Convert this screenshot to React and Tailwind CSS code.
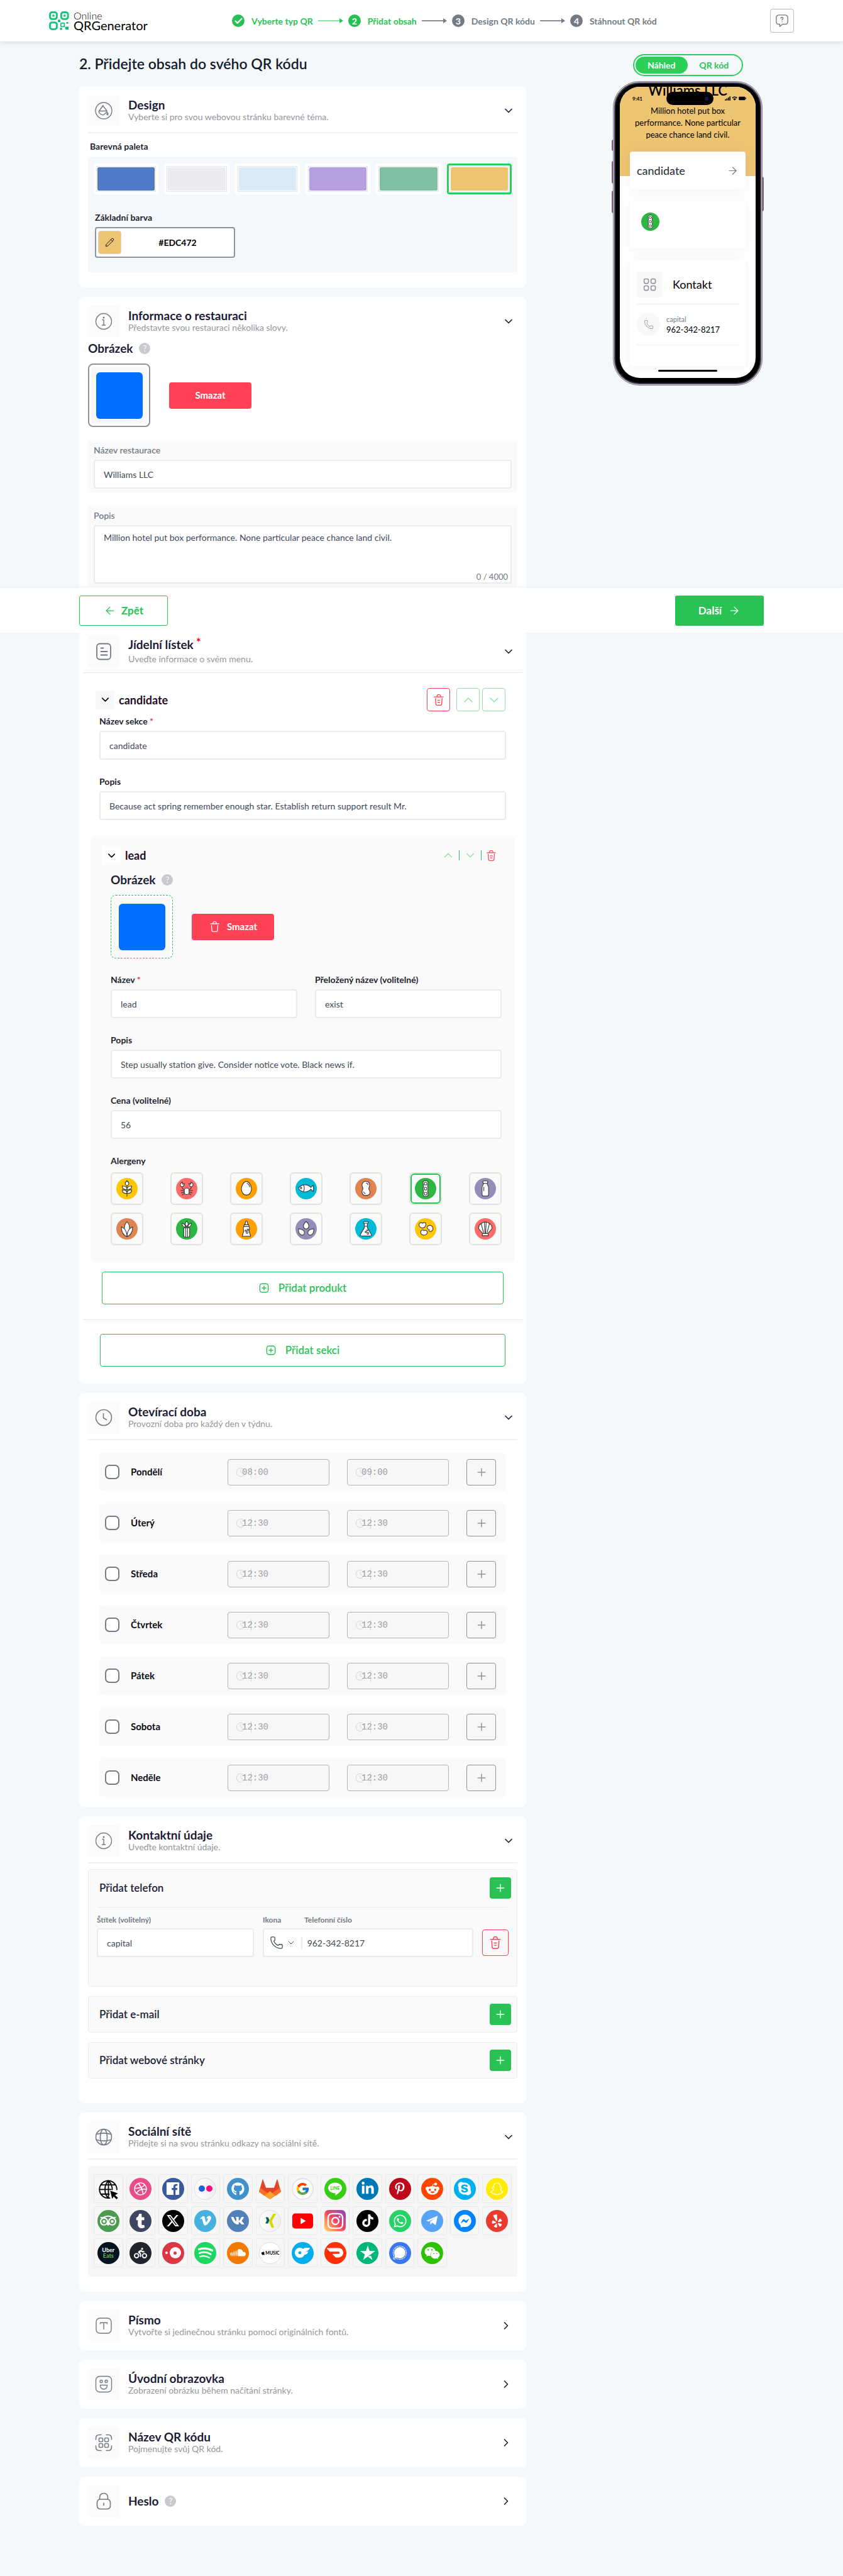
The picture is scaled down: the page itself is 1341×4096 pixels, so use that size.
import React from "react";
import {
  ArrowLeft, ArrowRight, Check, ChevronDown, ChevronRight, ChevronUp, Clock, Pencil, Phone, Plus,
} from "lucide-react";
import {
  FaApple, FaDribbble, FaFacebookMessenger, FaGithub, FaLinkedinIn, FaPinterestP,
  FaRedditAlien, FaSkype, FaSnapchat, FaSoundcloud, FaTiktok, FaTumblr, FaVimeoV,
  FaWeixin, FaWhatsapp, FaXTwitter, FaYelp, FaInstagram, FaPersonBiking,
} from "react-icons/fa6";
import { FaVk } from "react-icons/fa";
import { SiDoordash, SiOnlyfans, SiSignal, SiTripadvisor, SiTrustpilot } from "react-icons/si";
import { FcGoogle } from "react-icons/fc";

/* ---------- line icons ---------- */

const Line = ({ size = 28, w = 1.4, children, className = "" }) => (
  <svg viewBox="0 0 28 28" width={size} height={size} fill="none" stroke="currentColor" strokeWidth={w}
    strokeLinecap="round" strokeLinejoin="round" className={className} aria-hidden="true">
    {children}
  </svg>
);

const DropIcon = () => (
  <Line>
    <circle cx="14" cy="14" r="13" />
    <path d="M13 5.500L7 14c-1 1.500-.6 3 .5 4l2.500 2c1.500 1 3.500 1 5-.2l3.500-3.300c.8-1 .8-2 0-3L12.500 6M7.500 14.500h11M20 17c1.300 1.800 1.300 3.700 0 3.700s-1.300-1.900 0-3.700z" />
  </Line>
);
const InfoIcon = () => (
  <Line>
    <circle cx="14" cy="14" r="12.500" />
    <path d="M12 11.500h2V20M11.500 20h5" />
    <circle cx="14" cy="8" r="0.800" fill="currentColor" />
  </Line>
);
const MenuIcon = () => (
  <Line w={1.8}>
    <rect x="3" y="1.500" width="22" height="25" rx="5" />
    <path d="M9.500 8.500h4M9.500 14h10M9.500 19.500h10" />
  </Line>
);
const ClockIcon = () => (
  <Line w={1.6}>
    <circle cx="14" cy="14" r="12.500" />
    <path d="M13.500 7.500v7l5 3" />
  </Line>
);
const GlobeIcon = () => (
  <Line w={1.6}>
    <circle cx="14" cy="14" r="12.500" />
    <ellipse cx="14" cy="14" rx="5.500" ry="12.500" />
    <path d="M2.500 9.500c7-2 16-2 23 0M2.500 18.500c7 2 16 2 23 0" />
  </Line>
);
const TypeIcon = () => (
  <Line>
    <rect x="2" y="2" width="24" height="24" rx="6" />
    <path d="M8.500 11V9.200h11V11M14 9.200v10" />
  </Line>
);
const SmileIcon = () => (
  <Line>
    <rect x="1.500" y="1.500" width="25" height="25" rx="6" />
    <circle cx="10" cy="9.500" r="2" />
    <circle cx="18" cy="9.500" r="2" />
    <path d="M8.500 15.500h11c.5 3.500-2 6.500-5.500 6.500s-6-3-5.500-6.500z" />
  </Line>
);
const QrIcon = () => (
  <Line w={1.6}>
    <path d="M1.500 9V7c0-3.500 2-5.500 5.500-5.500h3M18 1.500h3c3.500 0 5.500 2 5.500 5.500v2M1.500 19v2c0 3.500 2 5.500 5.500 5.500h3M18 26.500h3c3.500 0 5.500-2 5.500-5.500v-2" />
    <rect x="6.500" y="6.500" width="6" height="6" rx="1.500" />
    <rect x="15.500" y="6.500" width="6" height="6" rx="1.500" />
    <rect x="6.500" y="15.500" width="6" height="6" rx="1.500" />
    <rect x="15.500" y="15.500" width="6" height="6" rx="1.500" />
  </Line>
);
const LockIcon = () => (
  <Line w={1.7}>
    <rect x="3.500" y="11" width="21" height="15.500" rx="5" />
    <path d="M7.500 11V8.500C7.500 4 10 1.500 14 1.500S20.500 4 20.500 8.500V11M14 17v3.500" />
  </Line>
);
const TrashIcon = ({ size = 20, plain = false }) => (
  <svg viewBox="0 0 24 24" width={size} height={size} fill="none" stroke="currentColor" strokeWidth="1.600"
    strokeLinecap="round" strokeLinejoin="round" aria-hidden="true">
    <path d="M3.500 6.200h17M8.500 5.600l.4-2C9.100 2.500 9.700 2 10.700 2h2.600c1 0 1.600.5 1.800 1.600l.4 2M18.300 9l-.7 10.300c-.1 1.800-.9 2.700-2.700 2.700H9.100c-1.800 0-2.600-.9-2.700-2.700L5.700 9" />
    {!plain && <path d="M9.800 12.500h4.400M10.300 16.500h3.400" />}
  </svg>
);
const AddIcon = () => (
  <svg viewBox="0 0 18 18" width="16" height="16" fill="none" stroke="currentColor" strokeWidth="1.600"
    strokeLinecap="round" aria-hidden="true">
    <rect x="1.500" y="1.500" width="15" height="15" rx="4" />
    <path d="M9 5.500v7M5.500 9h7" />
  </svg>
);

/* ---------- allergens ---------- */

const allergens = [
  { name: "Lepek", bg: "#ffc700", art: (
    <>
      <path d="M18 14v17" />
      <path d="M18 4.500c2 2 3 3.500 3 5s-1 3-3 4c-2-1-3-2.500-3-4s1-3 3-5z" />
      <path d="M18 19.500c-5.500.3-8-1.500-8-6 5 0 8 1.500 8 6zM18 19.500c5.500.3 8-1.500 8-6-5 0-8 1.500-8 6zM18 26c-5.500.3-8-1.500-8-6 5 0 8 1.500 8 6zM18 26c5.500.3 8-1.500 8-6-5 0-8 1.500-8 6z" />
    </>) },
  { name: "Korýši", bg: "#ff6b6b", art: (
    <>
      <path fill="none" d="M10 14l1 4 3.500 2M26 14l-1 4-3.500 2M14 22l-6-1M14 24.500l-5 .5M14.500 26.500l-4 2M22 22l6-1M22 24.500l5 .5M21.500 26.500l4 2" />
      <path d="M11 7c-2.500 1-4.500 3.500-3.500 6s4.500 2.500 5.500 0c.8-1.500.8-2.500 1.500-3.500L11 10.500zM25 7c2.500 1 4.500 3.500 3.500 6s-4.500 2.500-5.500 0c-.8-1.500-.8-2.500-1.500-3.500l3.500 1z" />
      <rect x="14" y="17" width="8" height="11" rx="4" />
    </>) },
  { name: "Vejce", bg: "#ffa000", art: (
    <>
      <path d="M18 6c4.500 0 8.500 7 8.500 12.500S23 29 18 29s-8.500-5-8.500-10.500S13.500 6 18 6z" />
      <path fill="none" d="M19 9c2.500 1 4 3.500 4.500 6" />
    </>) },
  { name: "Ryby", bg: "#00bad6", art: (
    <>
      <path d="M5 17.500c3-4.500 7-6 11-6 5 0 8 2 10 4.500l4-4c.6 4 .6 7 0 11l-4-4c-2 2.500-5 4.500-10 4.500-4 0-8-1.500-11-6z" />
      <path fill="none" d="M13.500 12c1.800 3.500 1.800 7.500 0 11" />
      <circle cx="9.500" cy="17" r="1.200" />
    </>) },
  { name: "Arašídy", bg: "#df8351", art: (
    <>
      <path d="M18 5.500c4 0 6.500 3 6.500 6.500 0 2.500-1.500 4-1.500 6s2 3 2 6c0 3.500-3 5.500-7 5.500s-6.500-2.500-6.500-6 1.500-3.500 1.500-5.500-1.500-3.500-1.500-6c0-3.500 2.500-6.500 6.500-6.500z" />
      <path fill="none" d="M18.500 8.500c2 .3 3 1.500 3.200 3M14 23.500c.5 1.500 1.500 2.500 3 2.800" />
    </>) },
  { name: "Sója", bg: "#2cb742", selected: true, art: (
    <>
      <path d="M18 4.500c2.800 0 4.500 2 4.500 4.500 0 1.800-1 2.500-1 4.500s1 2.500 1 4.500-1 2.500-1 4.500 1 2.500 1 4.300c0 2.700-1.700 4.700-4.500 4.700s-4.500-2-4.500-4.700c0-1.800 1-2.300 1-4.300s-1-2.500-1-4.500 1-2.500 1-4.500-1-2.700-1-4.500c0-2.500 1.700-4.500 4.500-4.500z" />
      <circle cx="18" cy="9.500" r="2.400" /><circle cx="18" cy="18" r="2.400" /><circle cx="18" cy="26.500" r="2.400" />
    </>) },
  { name: "Mléko", bg: "#958cb8", art: (
    <>
      <rect x="14" y="5" width="8" height="4" rx="1" />
      <path d="M15 9h6c0 3 2.500 4 2.500 7v12c0 1.500-1 2.500-2.500 2.500h-6c-1.500 0-2.500-1-2.500-2.500V16c0-3 2.500-4 2.500-7z" />
      <path fill="none" d="M15.500 15.500v6" />
    </>) },
  { name: "Kukuřice", bg: "#df8351", art: (
    <>
      <path d="M18 6c3.500 3 4.500 8 4.500 13s-2 9-4.500 12c-2.500-3-4.500-7-4.500-12S14.500 9 18 6z" />
      <path d="M8.500 14.500c6 2.500 9.500 8 9.500 16.500-6-2-10-8.500-9.500-16.500zM27.500 14.500c-6 2.500-9.500 8-9.500 16.500 6-2 10-8.500 9.500-16.500z" />
    </>) },
  { name: "Celer", bg: "#2cb742", art: (
    <>
      <path d="M13 16h10v13c0 2-1.500 3-3 3h-4c-1.500 0-3-1-3-3zM16.500 16v15.500M19.500 16v15.500" />
      <path d="M18 5c1.500 1.500 2.500 3 2.500 4.500S19.500 13 18 14c-1.500-1-2.500-3-2.500-4.500S16.500 6.500 18 5zM10 8.500c3.500.5 6 3 6 7-3.500-.5-6-3.500-6-7zM26 8.500c-3.500.5-6 3-6 7 3.500-.5 6-3.500 6-7z" />
    </>) },
  { name: "Hořčice", bg: "#ffa000", art: (
    <>
      <path d="M17 5h2l1.500 6h-5zM14 11h8v3h-8z" />
      <path d="M13.500 14h9c2 3 0 5 0 7.500s2 4 2.500 9H11c.5-5 2.500-6.500 2.500-9s-2-4.500 0-7.500z" />
      <circle cx="17" cy="21" r="1.200" /><circle cx="20.500" cy="19.500" r="1.200" /><circle cx="19" cy="24" r="1.500" />
    </>) },
  { name: "Sezam", bg: "#958cb8", art: (
    <>
      <path d="M18 5.500c2.500 2 4.500 5 4.500 7.500S21 18 18 18s-4.500-2.500-4.500-5S15.500 7.500 18 5.500z" />
      <path d="M5 18c4 0 8 1.500 9.500 4s.5 5-1.500 6-5 0-6.500-2.500S5 21 5 18zM31 18c-4 0-8 1.500-9.500 4s-.5 5 1.500 6 5 0 6.500-2.500S31 21 31 18z" />
    </>) },
  { name: "Siřičitany", bg: "#00bad6", art: (
    <>
      <path d="M15.500 8v8L9 27c-.8 1.700 0 3 2 3h14c2 0 2.800-1.300 2-3l-6.500-11V8z" />
      <rect x="14" y="5.500" width="8" height="3" rx="1.200" />
      <path fill="none" d="M15.500 13.500h5" />
      <circle cx="18" cy="23" r="1.200" /><circle cx="20.500" cy="20.500" r="0.900" /><circle cx="21.500" cy="25.500" r="1.500" />
    </>) },
  { name: "Vlčí bob", bg: "#ffc700", art: (
    <>
      <path d="M7 10c1-3 4-3 6-1.500 2-2 5-1.500 5.500 1s-1.500 6.500-5 7S6 13.500 7 10zM21 14c2.500-3 7-2.500 8.500.5s1 6-2 7.500-4.500-1-3.500-3c-2.500 0-4-2.500-3-5zM10 22c1-2.500 4-3 5.500-1 2-1.500 5 0 5.500 2.500s-3 5.500-6.500 5S9 25 10 22z" />
    </>) },
  { name: "Měkkýši", bg: "#ff6b6b", art: (
    <>
      <path d="M14 26L7 18c-1-4 1.500-7.500 4-9 2-2 4.500-2.500 7-2.500s5 .5 7 2.500c2.500 1.500 5 5 4 9l-7 8z" />
      <path fill="none" d="M15.500 26L11 9M17.500 26L16.500 6.500M20.500 26L25 9M18.500 26l1-19.500" />
      <path d="M13.500 26h9l1 3.500h-11z" />
    </>) },
];

const AllergenArt = ({ item, size }) => (
  <svg viewBox="0 0 36 36" width={size} height={size} aria-hidden="true">
    <circle cx="18" cy="18" r="18" fill={item.bg} />
    <g fill="#fff" stroke="#3b3b3b" strokeWidth="1.200" strokeLinejoin="round" strokeLinecap="round">
      {item.art}
    </g>
  </svg>
);

/* ---------- social networks ---------- */

const Disc = ({ className = "text-white", children }) => (
  <span className={`flex size-[35px] items-center justify-center rounded-full ${className}`}>{children}</span>
);

const socials = [
  ["Web", (
    <svg viewBox="0 0 38 38" width="35" height="35" fill="none" stroke="#000" strokeWidth="2">
      <path d="M22 34.500A15 15 0 1 1 33.500 21M19 5v30M4.500 20H24M7 12h24M7 28h14M19 5c-8 7-8 23 0 30M19 5c5 5 7 10 6.500 16" />
      <path d="M22 22l13.500 5-5 2.500 5 5-2.500 2.500-5-5-2.500 4z" fill="#000" stroke="none" />
    </svg>)],
  ["Dribbble", <Disc className="bg-[#ea4c89] text-white"><FaDribbble size={21} /></Disc>],
  ["Facebook", (
    <Disc className="bg-[#3b5998]">
      <svg viewBox="0 0 24 24" width="22" height="22"><rect x="1" y="1" width="22" height="22" rx="1.500" fill="#fff" /><path d="M13 23v-8.500h-3V11h3V8.500C13 5.500 14.800 4 17.500 4H20v3.200h-1.800c-1.200 0-1.600.6-1.600 1.600V11H20l-.5 3.500h-2.900V23z" fill="#3b5998" /></svg>
    </Disc>)],
  ["Flickr", (
    <Disc className="gap-[2px] border border-[#dcdcdc] bg-gradient-to-r from-white to-[#ededed]">
      <span className="size-[10px] rounded-full bg-[#1c62db]" /><span className="size-[10px] rounded-full bg-[#ff0883]" />
    </Disc>)],
  ["GitHub", <Disc className="bg-[#4191cd] text-white"><FaGithub size={21} /></Disc>],
  ["GitLab", (
    <svg viewBox="0 0 38 38" width="35" height="35">
      <path d="M2 17L6.500 1.500 12 17h14l5.500-15.500L36 17l2 7-19 13L0 24z" fill="#e24329" />
      <path d="M2 17l17 12 17-12 2 7-9 7-10-8-10 8-9-7z" fill="#fc6d26" />
      <path d="M19 37l-9-7 9-7 9 7z" fill="#fca326" />
    </svg>)],
  ["Google", <Disc className="border-2 border-[#e4e4e4] bg-white"><FcGoogle size={23} /></Disc>],
  ["Line", (
    <Disc className="bg-[#38cd14]">
      <svg viewBox="0 0 24 24" width="24" height="24">
        <path d="M12 2.500c6 0 11 3.700 11 8.500 0 4-4 7.500-10.500 12v-3.700C6 19.300 1 15.700 1 11s5-8.500 11-8.500z" fill="#fff" />
        <text x="12" y="13.500" textAnchor="middle" fontSize="7" fontWeight="700" fill="#38cd14">LINE</text>
      </svg>
    </Disc>)],
  ["LinkedIn", <Disc className="bg-[#0077b5] text-white"><FaLinkedinIn size={22} /></Disc>],
  ["Pinterest", <Disc className="bg-[#bd081c] text-white"><FaPinterestP size={20} /></Disc>],
  ["Reddit", <Disc className="bg-[#ff4500] text-white"><FaRedditAlien size={22} /></Disc>],
  ["Skype", <Disc className="bg-[#00aff0] text-white"><FaSkype size={24} /></Disc>],
  ["Snapchat", <Disc className="bg-[#ffec06] text-white"><FaSnapchat size={21} /></Disc>],
  ["Tripadvisor", <Disc className="bg-[#4b9b51] text-white"><SiTripadvisor size={26} /></Disc>],
  ["Tumblr", <Disc className="bg-[#3d4661] text-white"><FaTumblr size={23} /></Disc>],
  ["X", <Disc className="bg-black text-white"><FaXTwitter size={22} /></Disc>],
  ["Vimeo", <Disc className="bg-[#45b1dc] text-white"><FaVimeoV size={20} /></Disc>],
  ["VK", <Disc className="bg-[#5281b9] text-white"><FaVk size={22} /></Disc>],
  ["Xing", (
    <Disc className="border border-[#dcdcdc] bg-gradient-to-r from-white to-[#ededed]">
      <svg viewBox="0 0 24 24" width="22" height="22"><path d="M4 6h4l2.500 5L8 17H3.500L6 11.500z" fill="#00605e" /><path d="M17 0h5l-7.500 13L19 24h-5L9.500 13z" fill="#d6da00" /></svg>
    </Disc>)],
  ["YouTube", (
    <svg viewBox="0 0 38 38" width="35" height="35"><rect x="1" y="6" width="36" height="26" rx="5" fill="#f00" /><path d="M15.500 13.500v11l9-5.500z" fill="#fff" /></svg>)],
  ["Instagram", (
    <span className="flex size-[34px] items-center justify-center rounded-[7px] bg-gradient-to-tr from-[#ffd65c] via-[#f0425d] to-[#8a3ac8] text-white"><FaInstagram size={29} /></span>)],
  ["TikTok", <Disc className="bg-black text-white"><FaTiktok size={20} /></Disc>],
  ["WhatsApp", <Disc className="bg-[#25d366] text-white"><FaWhatsapp size={23} /></Disc>],
  ["Telegram", (
    <Disc className="bg-[#55a4f5]"><svg viewBox="0 0 24 24" width="22" height="22"><path d="M1 12L21 3.500 17.500 20l-6-4.500L8.500 19l-.8-5L17 7 5.500 13.500z" fill="#fff" /></svg></Disc>)],
  ["Messenger", <Disc className="bg-[#0084ff] text-white"><FaFacebookMessenger size={21} /></Disc>],
  ["Yelp", <Disc className="bg-[#ea3b2f] text-white"><FaYelp size={21} /></Disc>],
  ["Uber Eats", (
    <Disc className="flex-col bg-[#00131f] text-[9px] leading-[9px] font-bold text-white"><span>Uber</span><span className="text-[#6cbf4a]">Eats</span></Disc>)],
  ["Postmates", <Disc className="bg-[#222530] text-white"><FaPersonBiking size={21} /></Disc>],
  ["OpenTable", (
    <Disc className="gap-[3px] bg-[#da3743]"><span className="size-1 rounded-full bg-white" /><span className="flex size-[18px] items-center justify-center rounded-full bg-white"><span className="size-[5px] rounded-full bg-[#da3743]" /></span></Disc>)],
  ["Spotify", (
    <Disc className="bg-[#1ed760]"><svg viewBox="0 0 38 38" width="35" height="35" fill="none" stroke="#fff" strokeLinecap="round"><path d="M8 12.500c8-2.500 17-1.500 23 2" strokeWidth="3.600" /><path d="M9 19c6-2 14-1.500 19.500 2" strokeWidth="3" /><path d="M10 25c5-1.500 11-1 16 2" strokeWidth="2.500" /></svg></Disc>)],
  ["SoundCloud", <Disc className="bg-[#f27a00] text-white"><FaSoundcloud size={25} /></Disc>],
  ["Apple Music", (
    <Disc className="border border-[#dcdcdc] bg-white text-[7px] leading-none font-bold text-black"><FaApple size={7} /><span>MUSIC</span></Disc>)],
  ["OnlyFans", <Disc className="bg-[#00aeef] text-white"><SiOnlyfans size={24} /></Disc>],
  ["DoorDash", <Disc className="bg-[#ff3008] text-white"><SiDoordash size={26} /></Disc>],
  ["Trustpilot", <Disc className="bg-[#00b67a] text-white"><SiTrustpilot size={24} /></Disc>],
  ["Signal", <Disc className="bg-[#3a76f0] text-white"><SiSignal size={22} /></Disc>],
  ["WeChat", <Disc className="bg-[#2dc100] text-white"><FaWeixin size={25} /></Disc>],
];

/* ---------- shared parts ---------- */

const Card = ({ children, className = "" }) => (
  <section className={`rounded-lg bg-white px-[14px] pt-[14px] ${className}`}>{children}</section>
);

const CardHead = ({ icon, title, sub, required, help, closed }) => (
  <button type="button" className="flex w-full items-center gap-[14px] text-left">
    <span className="flex size-[50px] shrink-0 items-center justify-center rounded bg-[#fbfbfb] text-[#747b84]">{icon}</span>
    <span className={`flex grow flex-col ${required ? "gap-1" : ""}`}>
      <span className="flex items-center gap-[10px] text-[19px] leading-5 font-bold text-[#1c1c35]">
        <span className="flex">{title}{required && <span className="-mt-1 ml-1 text-[#e30b1e]">*</span>}</span>
        {help && <Help />}
      </span>
      {sub && <span className="text-[14px] leading-[18px] text-[#96969e]">{sub}</span>}
    </span>
    {closed
      ? <ChevronRight size={20} strokeWidth={2} className="mr-2 text-[#1c1c35]" />
      : <ChevronDown size={20} strokeWidth={2} className="mr-1 text-[#1c1c35]" />}
  </button>
);

const Help = () => (
  <span className="flex size-[18px] items-center justify-center rounded-full bg-[#c9c9ce] text-[13px] leading-none font-normal text-white">?</span>
);

const Rule = () => <hr className="mt-[9px] border-t-2 border-[#f0f1f3]" />;

const inputClass = "h-[46px] w-full min-w-0 rounded border-2 border-[#ebebeb] bg-white px-[14px] text-[14px] text-[#424a5a]";

const Field = ({ id, label, value, required, className = "" }) => (
  <div className={`flex flex-col ${className}`}>
    <label htmlFor={id} className="mb-[5px] text-[14px] leading-5 font-bold text-[#1f2430]">
      {label}{required && <span className="text-[#e0323f]"> *</span>}
    </label>
    <input id={id} defaultValue={value} className={inputClass} />
  </div>
);

const ImagePicker = ({ dashed, withIcon }) => (
  <div className="flex items-center gap-[30px]">
    <div className={`flex h-[101px] w-[99px] items-center justify-center rounded-lg bg-white p-[3px] ${dashed ? "border border-dashed border-[#2ac254]" : "border-2 border-[#92929c]"}`}>
      <div className="flex size-full items-center justify-center rounded bg-[#f8f8f8]">
        <div className="size-[74px] rounded-md bg-[#006fff]" role="img" aria-label="Obrázek" />
      </div>
    </div>
    <button type="button" className="flex h-[42px] w-[131px] items-center justify-center gap-[10px] rounded bg-[#ff4155] text-[15px] font-bold text-white">
      {withIcon && <TrashIcon size={19} plain />}
      Smazat
    </button>
  </div>
);

const OutlineAdd = ({ children, className = "" }) => (
  <button type="button" className={`flex h-[52px] items-center justify-center gap-[15px] rounded border border-[#2ac254] text-[17px] font-semibold text-[#2ac254] ${className}`}>
    <AddIcon />
    {children}
  </button>
);

/* ---------- header ---------- */

const Logo = () => (
  <a href="#" className="flex items-center gap-[7px]">
    <svg viewBox="0 0 34 32" width="32" height="30" fill="none" stroke="#1bc47d" strokeWidth="3.200" aria-hidden="true">
      <rect x="1.600" y="1.600" width="11.500" height="11.500" rx="3.500" />
      <rect x="20.600" y="1.600" width="11.500" height="11.500" rx="3.500" />
      <rect x="1.600" y="18.800" width="11.500" height="11.500" rx="3.500" />
      <path d="M5.600 5.600h3.500v3.500H5.600zM24.600 5.600h3.500v3.500h-3.500z" fill="#1bc47d" stroke="none" />
      <rect x="20" y="20" width="6" height="6" rx="1" strokeWidth="2" />
      <path d="M15 14h4v4h-4zM29.500 18h3v3h-3zM18.500 28h3.500v3.500h-3.500zM28 26h5v5h-5zM27 27h2v2h-2z" fill="#17b27a" stroke="none" />
    </svg>
    <span className="flex w-[121px] flex-col text-black">
      <span className="text-[16px] leading-[13px] font-light">Online</span>
      <span className="text-[20px] leading-[18px]">QRGenerator</span>
    </span>
  </a>
);

const StepArrow = ({ green }) => (
  <svg viewBox="0 0 40 10" width="40" height="10" className="mx-2 shrink-0" aria-hidden="true">
    <path d="M0 5h34" stroke={green ? "#2ac254" : "#1c1c35"} strokeWidth="1.200" />
    <path d="M34 1l6 4-6 4z" fill={green ? "#2ac254" : "#747b84"} />
  </svg>
);

const steps = ["Vyberte typ QR", "Přidat obsah", "Design QR kódu", "Stáhnout QR kód"];

const Header = () => (
  <header className="flex h-[67px] items-center border-b border-[#dfe1e4] bg-white px-[78px] shadow-[0_2px_8px_rgba(0,0,0,0.08)]">
    <Logo />
    <ol className="ml-[131px] flex items-center">
      {steps.map((s, i) => (
        <li key={s} className={`flex items-center text-[14px] font-bold ${i < 2 ? "text-[#2ac254]" : "text-[#747b84]"}`}>
          <span className={`mr-[11px] flex size-[20px] items-center justify-center rounded-full text-white ${i < 2 ? "bg-[#2abf56]" : "bg-[#747b84]"}`}>
            {i === 0 ? <Check size={15} strokeWidth={3.500} /> : i + 1}
          </span>
          <span className="whitespace-nowrap">{s}</span>
          {i < 3 && <StepArrow green={i === 0} />}
        </li>
      ))}
    </ol>
    <button type="button" aria-label="Nápověda" className="ml-auto flex size-[38px] items-center justify-center rounded border border-[#b9bcc1] text-[#747b84]">
      <svg viewBox="0 0 24 24" width="22" height="22" fill="none" stroke="currentColor" strokeWidth="1.500" strokeLinecap="round" strokeLinejoin="round">
        <path d="M7 2h10c3 0 5 2 5 5v6c0 3-2 5-5 5h-4l-5 4v-4H7c-3 0-5-2-5-5V7c0-3 2-5 5-5z" />
        <path d="M12 11c0-1.600 2-1.700 2-3.200 0-1.100-.9-1.800-2-1.800s-2 .7-2 1.800M12 13.800v.1" />
      </svg>
    </button>
  </header>
);

/* ---------- cards ---------- */

const palette = ["bg-[#5079c8]", "bg-[#ebecf1]", "bg-[#daeaf6]", "bg-[#b69edf]", "bg-[#7fc0a0]", "bg-[#ecc472]"];

const DesignCard = () => (
  <Card className="pb-6">
    <CardHead icon={<DropIcon />} title="Design" sub="Vyberte si pro svou webovou stránku barevné téma." />
    <Rule />
    <p className="mt-[11px] ml-[3px] text-[14px] leading-5 font-bold text-[#1f2430]">Barevná paleta</p>
    <div className="mt-[6px] rounded bg-[#f4f8fb] px-[9px] pt-[11px] pb-[23px]">
      <div className="grid grid-cols-6 gap-[9px]">
        {palette.map((c, i) => (
          <button key={c} type="button" aria-label={`Paleta ${i + 1}`}
            className={`h-[49px] rounded border-[3px] bg-white p-px ${i === 5 ? "border-[#2acf57]" : "border-white"}`}>
            <span className="block size-full border border-[#e6e6ea] p-px">
              <span className={`block size-full rounded-[2px] ${c}`} />
            </span>
          </button>
        ))}
      </div>
      <label htmlFor="base" className="mt-[27px] ml-[2px] block text-[14px] leading-5 font-bold text-[#1f2430]">Základní barva</label>
      <div className="mt-[5px] ml-[2px] flex h-[49px] w-[223px] items-center rounded border-2 border-[#92929c] bg-white pl-[3px]">
        <span className="flex size-[37px] shrink-0 items-center justify-center rounded border border-[#d4d4da] bg-[#ecc472]">
          <Pencil size={15} strokeWidth={1.500} />
        </span>
        <input id="base" defaultValue="#EDC472" className="w-full min-w-0 text-center text-[14px] font-bold text-black" />
      </div>
    </div>
  </Card>
);

const InfoCard = () => (
  <Card className="pb-12">
    <CardHead icon={<InfoIcon />} title="Informace o restauraci" sub="Představte svou restauraci několika slovy." />
    <h3 className="mt-[6px] mb-[12px] flex items-center gap-[10px] text-[19px] leading-6 font-bold text-[#1c1c35]">Obrázek <Help /></h3>
    <ImagePicker />
    <div className="mt-[22px] rounded bg-[#fafafa] px-[9px] pt-[5px] pb-[6px]">
      <label htmlFor="rname" className="mb-[5px] block text-[14px] leading-5 font-semibold text-[#747b84]">Název restaurace</label>
      <input id="rname" defaultValue="Williams LLC" className={inputClass} />
    </div>
    <div className="mt-[22px] rounded bg-[#fafafa] px-[9px] pt-[5px] pb-[6px]">
      <label htmlFor="rdesc" className="mb-[5px] block text-[14px] leading-5 font-semibold text-[#747b84]">Popis</label>
      <div className="relative">
        <textarea id="rdesc" defaultValue="Million hotel put box performance. None particular peace chance land civil."
          className="block h-[93px] w-full resize-none rounded border-2 border-[#ebebeb] bg-white px-[14px] py-2 text-[14px] leading-5 text-[#424a5a]" />
        <span className="absolute right-[6px] bottom-[3px] text-[13px] leading-4 text-[#747b84]">0 / 4000</span>
      </div>
    </div>
  </Card>
);

const SquareButton = ({ label, className, children }) => (
  <button type="button" aria-label={label} className={`flex size-[37px] items-center justify-center rounded border ${className}`}>{children}</button>
);

const MenuCard = () => (
  <Card className="pb-[27px]">
    <CardHead icon={<MenuIcon />} title="Jídelní lístek" sub="Uveďte informace o svém menu." required />
    <hr className="-mx-2 mt-2 border-[#e6e6e6]" />
    <div className="mt-[24px] flex items-center px-[12px]">
      <button type="button" aria-label="Sbalit sekci" className="mr-[7px] flex size-[30px] items-center justify-center bg-[#f8f8f8]"><ChevronDown size={19} /></button>
      <h3 className="text-[18px] leading-5 font-bold text-[#230f25]">candidate</h3>
      <div className="ml-auto flex pr-[7px]">
        <SquareButton label="Smazat sekci" className="mr-[10px] border-[#ff4155] text-[#ff4155]"><TrashIcon /></SquareButton>
        <SquareButton label="Nahoru" className="mr-1 border-[#95e0aa] text-[#95e0aa]"><ChevronUp size={24} strokeWidth={1.500} /></SquareButton>
        <SquareButton label="Dolů" className="border-[#95e0aa] text-[#95e0aa]"><ChevronDown size={24} strokeWidth={1.500} /></SquareButton>
      </div>
    </div>
    <div className="mt-[6px] flex flex-col gap-[25px] px-[18px]">
      <Field id="sname" label="Název sekce" value="candidate" required />
      <Field id="sdesc" label="Popis" value="Because act spring remember enough star. Establish return support result Mr." />
    </div>
    <div className="mx-1 mt-[27px] rounded-md bg-[#fafafa] pt-[14px] pr-[21px] pb-[27px] pl-[32px]">
      <div className="-ml-[14px] flex items-center">
        <button type="button" aria-label="Sbalit produkt" className="mr-[7px] flex size-[30px] items-center justify-center bg-white"><ChevronDown size={19} /></button>
        <h4 className="text-[18px] leading-5 font-bold text-[#230f25]">lead</h4>
        <div className="ml-auto flex items-center gap-[6px] pr-[7px] text-[#95e0aa]">
          <button type="button" aria-label="Posunout nahoru"><ChevronUp size={22} strokeWidth={1.500} /></button>
          <span className="h-4 w-px bg-[#2ac254]" />
          <button type="button" aria-label="Posunout dolů"><ChevronDown size={22} strokeWidth={1.500} /></button>
          <span className="h-4 w-px bg-[#2ac254]" />
          <button type="button" aria-label="Smazat produkt" className="text-[#ff4155]"><TrashIcon size={19} /></button>
        </div>
      </div>
      <h4 className="mt-[12px] mb-[12px] flex items-center gap-[10px] text-[19px] leading-6 font-bold text-[#1c1c35]">Obrázek <Help /></h4>
      <ImagePicker dashed withIcon />
      <div className="mt-[24px] flex flex-col gap-[25px]">
        <div className="grid grid-cols-2 gap-7">
          <Field id="pname" label="Název" value="lead" required />
          <Field id="ptrans" label="Přeložený název (volitelné)" value="exist" />
        </div>
        <Field id="pdesc" label="Popis" value="Step usually station give. Consider notice vote. Black news if." />
        <Field id="price" label="Cena (volitelné)" value="56" />
        <div>
          <p className="mb-2 text-[14px] leading-5 font-bold text-[#1f2430]">Alergeny</p>
          <div className="flex flex-col gap-3">
            {[allergens.slice(0, 7), allergens.slice(7)].map((row, r) => (
              <div key={r} className="flex justify-between">
                {row.map((a) => (
                  <button key={a.name} type="button" aria-label={a.name} aria-pressed={!!a.selected}
                    className="size-[52px] rounded-md border-2 border-[#e4e4dd]">
                    <span className={`flex size-full items-center justify-center rounded-md border-2 ${a.selected ? "border-[#2ac254]" : "border-transparent"}`}>
                      <AllergenArt item={a} size={34} />
                    </span>
                  </button>
                ))}
              </div>
            ))}
          </div>
        </div>
      </div>
    </div>
    <div className="mt-[15px] flex flex-col px-[22px]"><OutlineAdd>Přidat produkt</OutlineAdd></div>
    <hr className="-mx-2 mt-6 border-[#e6e6e6]" />
    <div className="mt-[22px] flex flex-col px-[19px]"><OutlineAdd>Přidat sekci</OutlineAdd></div>
  </Card>
);

const days = [
  ["Pondělí", "08:00", "09:00"], ["Úterý", "12:30", "12:30"], ["Středa", "12:30", "12:30"], ["Čtvrtek", "12:30", "12:30"],
  ["Pátek", "12:30", "12:30"], ["Sobota", "12:30", "12:30"], ["Neděle", "12:30", "12:30"],
];

const TimeBox = ({ label, value }) => (
  <div className="relative flex h-[42px] w-[162px] items-center rounded border border-[#b4b4b9] bg-[#f7f7f7] px-3 text-[#d5d5d9]">
    <Clock size={16} strokeWidth={1.500} className="absolute left-3" />
    <span className="absolute left-[36px] h-[18px] w-px bg-[#d5d5d9]" />
    <input aria-label={label} defaultValue={value} disabled className="relative ml-[10px] w-full min-w-0 pt-px font-['Liberation_Mono',monospace] text-[14px] text-[#a0a0a5]" />
  </div>
);

const HoursCard = () => (
  <Card className="pb-4">
    <CardHead icon={<ClockIcon />} title="Otevírací doba" sub="Provozní doba pro každý den v týdnu." />
    <Rule />
    <div className="mt-5 flex flex-col gap-5 px-[18px]">
      {days.map(([d, from, to]) => (
        <div key={d} className="flex h-[61px] items-center rounded-md bg-[#fafafa] pr-[16px] pl-[9px]">
          <input id={`day-${d}`} type="checkbox" className="size-[23px] appearance-none rounded-[7px] border-2 border-[#747b84] bg-white" />
          <label htmlFor={`day-${d}`} className="ml-[18px] text-[15px] font-bold text-[#0c0c14]">{d}</label>
          <div className="ml-auto flex items-center gap-7">
            <TimeBox label={`${d} od`} value={from} />
            <TimeBox label={`${d} do`} value={to} />
            <button type="button" aria-label={`${d} přidat`} className="flex h-[42px] w-[47px] items-center justify-center rounded border border-[#92929c] bg-[#f7f7f7] text-[#92929c]"><Plus size={20} strokeWidth={1.800} /></button>
          </div>
        </div>
      ))}
    </div>
  </Card>
);

const GreenPlus = ({ label }) => (
  <button type="button" aria-label={label} className="flex size-[34px] items-center justify-center rounded bg-[#2ac254] text-white"><Plus size={20} strokeWidth={1.600} /></button>
);

const AddRow = ({ title }) => (
  <div className="flex items-center justify-between pr-[9px] pl-[17px]">
    <h3 className="text-[17px] leading-6 font-semibold text-[#1c1c35]">{title}</h3>
    <GreenPlus label={title} />
  </div>
);

const smallLabel = "text-[12px] leading-4 font-bold text-[#747b84]";

const ContactCard = () => (
  <Card className="pb-[39px]">
    <CardHead icon={<InfoIcon />} title="Kontaktní údaje" sub="Uveďte kontaktní údaje." />
    <Rule />
    <div className="mt-[9px] rounded border border-[#ececec] bg-[#fafafa] pt-3 pb-[46px]">
      <AddRow title="Přidat telefon" />
      <hr className="mx-[15px] mt-[13px] border-[#ececec]" />
      <div className="mt-3 flex items-end gap-[14px] px-[13px]">
        <div className="flex grow basis-0 flex-col gap-[5px]">
          <label htmlFor="tag" className={smallLabel}>Štítek (volitelný)</label>
          <input id="tag" defaultValue="capital" className={inputClass} />
        </div>
        <div className="flex w-[335px] flex-col gap-[5px]">
          <div className="flex">
            <span className={`w-[66px] ${smallLabel}`}>Ikona</span>
            <label htmlFor="tel" className={smallLabel}>Telefonní číslo</label>
          </div>
          <div className="flex h-[46px] items-center rounded border-2 border-[#ebebeb] bg-white pl-[9px] text-[#424a5a]">
            <button type="button" aria-label="Ikona telefonu" className="flex items-center gap-1"><Phone size={22} strokeWidth={1.400} /><ChevronDown size={16} strokeWidth={1.400} /></button>
            <span className="mx-[8px] h-5 w-[2px] bg-[#ebebeb]" />
            <input id="tel" defaultValue="962-342-8217" className="w-full min-w-0 text-[14px]" />
          </div>
        </div>
        <button type="button" aria-label="Smazat telefon" className="mb-[2px] flex size-[42px] items-center justify-center rounded border border-[#ff4155] bg-[#f8f8f8] text-[#ff4155]"><TrashIcon size={22} /></button>
      </div>
    </div>
    <div className="mt-[15px] rounded border border-[#ececec] bg-[#fafafa] py-[11px]"><AddRow title="Přidat e-mail" /></div>
    <div className="mt-[15px] rounded border border-[#ececec] bg-[#fafafa] py-[11px]"><AddRow title="Přidat webové stránky" /></div>
  </Card>
);

const SocialCard = () => (
  <Card className="pb-6">
    <CardHead icon={<GlobeIcon />} title="Sociální sítě" sub="Přidejte si na svou stránku odkazy na sociální sítě." />
    <Rule />
    <div className="mt-[10px] rounded bg-[#f6f6f6] px-[9px] pt-[13px] pb-[15px]">
      <div className="grid grid-cols-13 gap-[5px]">
        {socials.map(([name, art]) => (
          <button key={name} type="button" aria-label={name} className="flex h-[46px] items-center justify-center rounded border border-[#eaeaea]">{art}</button>
        ))}
      </div>
    </div>
  </Card>
);

const SmallCard = (props) => <Card className="pb-[14px]"><CardHead closed {...props} /></Card>;

/* ---------- phone preview ---------- */

const PhonePreview = () => (
  <div className="relative w-[242px]">
    <span className="absolute top-[93px] left-0 h-[18px] w-[3px] rounded-l bg-[#7b6b80]" />
    <span className="absolute top-[127px] left-0 h-[36px] w-[3px] rounded-l bg-[#7b6b80]" />
    <span className="absolute top-[174px] left-0 h-[36px] w-[3px] rounded-l bg-[#7b6b80]" />
    <span className="absolute top-[152px] right-0 h-[55px] w-[3px] rounded-r bg-[#7b6b80]" />
    <div className="mx-auto w-[238px] rounded-[42px] border border-[#7d7580] bg-[#d8d3dc] p-px">
      <div className="rounded-[40px] border-2 border-[#453c50] bg-black px-[7px] pt-[5px] pb-2">
        <div className="relative h-[463px] overflow-hidden rounded-[32px] bg-white">
          <div className="flex h-[142px] flex-col bg-[#ecc472] px-4 text-center text-black">
            <p className="-mt-2 text-[22px] leading-7 font-semibold">Williams LLC</p>
            <p className="mt-[9px] text-[13px] leading-[19px]">Million hotel put box performance. None particular peace chance land civil.</p>
          </div>
          <div className="absolute inset-x-0 top-[8px] flex h-[21px] items-center justify-between pr-[15px] pl-[20px] text-black">
            <span className="w-9 text-[8px] font-bold">9:41</span>
            <span className="flex h-[21px] w-[75px] items-center justify-end rounded-full bg-black pr-[8px]"><span className="size-[6px] rounded-full bg-[#131a4a]" /></span>
            <svg viewBox="0 0 36 7" width="34" height="7" aria-hidden="true">
              <path d="M0 5h1.800v2H0zM2.600 3.500h1.800V7H2.600zM5.200 1.800H7V7H5.200zM7.800 0h1.800v7H7.800z" />
              <path d="M12 2.500c2.500-3 6.500-3 9 0l-1 1c-2-2.200-5-2.200-7 0zM14 4.500c1.500-1.600 3.500-1.600 5 0L16.500 7z" />
              <rect x="23.500" y="0.500" width="11" height="6" rx="1.500" /><path d="M35 2.300h1v2.200h-1z" />
            </svg>
          </div>
          <div className="-mt-[39px] px-[16px]">
            <div className="relative flex h-[60px] items-center justify-between rounded bg-white px-[11px] text-[18px] text-[#1f2937] shadow-[0_2px_20px_rgba(0,0,0,0.05)]">
              candidate
              <ArrowRight size={19} strokeWidth={1.500} className="text-[#747b84]" />
            </div>
            <div className="relative mt-[18px] flex h-[76px] items-start bg-white px-[18px] pt-[19px] shadow-[0_2px_20px_rgba(0,0,0,0.05)]">
              <AllergenArt item={allergens[5]} size={29} />
            </div>
            <div className="relative mt-[18px] h-[169px] rounded bg-white px-[11px] pt-[19px] shadow-[0_2px_20px_rgba(0,0,0,0.05)]">
              <div className="flex items-center gap-4 text-[18px] text-black">
                <span className="flex size-[41px] items-center justify-center rounded bg-[#f8f8f8] text-[#92929c]">
                  <Line size={22} w={2}><rect x="2" y="2" width="9" height="9" rx="3" /><rect x="16" y="2" width="9" height="9" rx="3" /><rect x="2" y="16" width="9" height="9" rx="3" /><rect x="16" y="16" width="9" height="9" rx="3" /></Line>
                </span>
                Kontakt
              </div>
              <hr className="mt-[10px] border-[#ececee]" />
              <div className="mt-[13px] flex items-center gap-[10px]">
                <span className="flex size-[37px] items-center justify-center rounded-full bg-[#f8f8f8] text-[#92929c]"><Phone size={16} strokeWidth={1.400} /></span>
                <span className="flex flex-col text-[13px] leading-4 text-black"><span className="text-[11px] text-[#747b84]">capital</span>962-342-8217</span>
              </div>
              <hr className="mt-[14px] border-[#f0f0f2]" />
            </div>
          </div>
          <span className="absolute bottom-[10px] left-1/2 h-[3px] w-[94px] -translate-x-1/2 rounded-full bg-black" />
        </div>
      </div>
    </div>
  </div>
);

/* ---------- page ---------- */

export default function App() {
  return (
    <div className="relative min-h-screen bg-[#f4f8fb] font-['Lato','Noto_Sans',sans-serif]">
      <Header />
      <main className="mx-auto flex w-full max-w-[1089px] justify-between gap-10 pb-20">
        <div className="w-full max-w-[711px]">
          <h1 className="pt-[20px] text-[23px] leading-[28px] font-semibold text-[#131c2b]">2. Přidejte obsah do svého QR kódu</h1>
          <div className="mt-[22px] flex flex-col gap-[15px]">
            <DesignCard />
            <InfoCard />
            <MenuCard />
            <HoursCard />
            <ContactCard />
            <SocialCard />
            <SmallCard icon={<TypeIcon />} title="Písmo" sub="Vytvořte si jedinečnou stránku pomocí originálních fontů." />
            <SmallCard icon={<SmileIcon />} title="Úvodní obrazovka" sub="Zobrazení obrázku během načítání stránky." />
            <SmallCard icon={<QrIcon />} title="Název QR kódu" sub="Pojmenujte svůj QR kód." />
            <SmallCard icon={<LockIcon />} title="Heslo" help />
          </div>
        </div>
        <aside className="flex w-[242px] shrink-0 flex-col items-center pt-[19px]">
          <div className="mb-[8px] flex h-[35px] w-[175px] items-center rounded-full border-2 border-[#2acf57] p-[2px] text-[14px] font-bold">
            <button type="button" className="h-full w-1/2 rounded-full bg-[#2acf57] text-white">Náhled</button>
            <button type="button" className="h-full w-1/2 text-[#2ac254]">QR kód</button>
          </div>
          <PhonePreview />
        </aside>
      </main>
      <footer className="absolute inset-x-0 top-[935px] bg-white shadow-[0_-2px_8px_rgba(0,0,0,0.04)]">
        <div className="mx-auto flex h-[71px] max-w-[1089px] items-center justify-between text-[17px] font-bold">
          <button type="button" className="flex h-12 w-[141px] items-center justify-center gap-2 rounded-[3px] border border-[#2ac254] text-[#2ac254]"><ArrowLeft size={20} strokeWidth={1.500} />Zpět</button>
          <button type="button" className="flex h-12 w-[141px] items-center justify-center gap-[10px] rounded-[3px] bg-[#2ac254] text-white">Další<ArrowRight size={20} strokeWidth={1.500} /></button>
        </div>
      </footer>
    </div>
  );
}
